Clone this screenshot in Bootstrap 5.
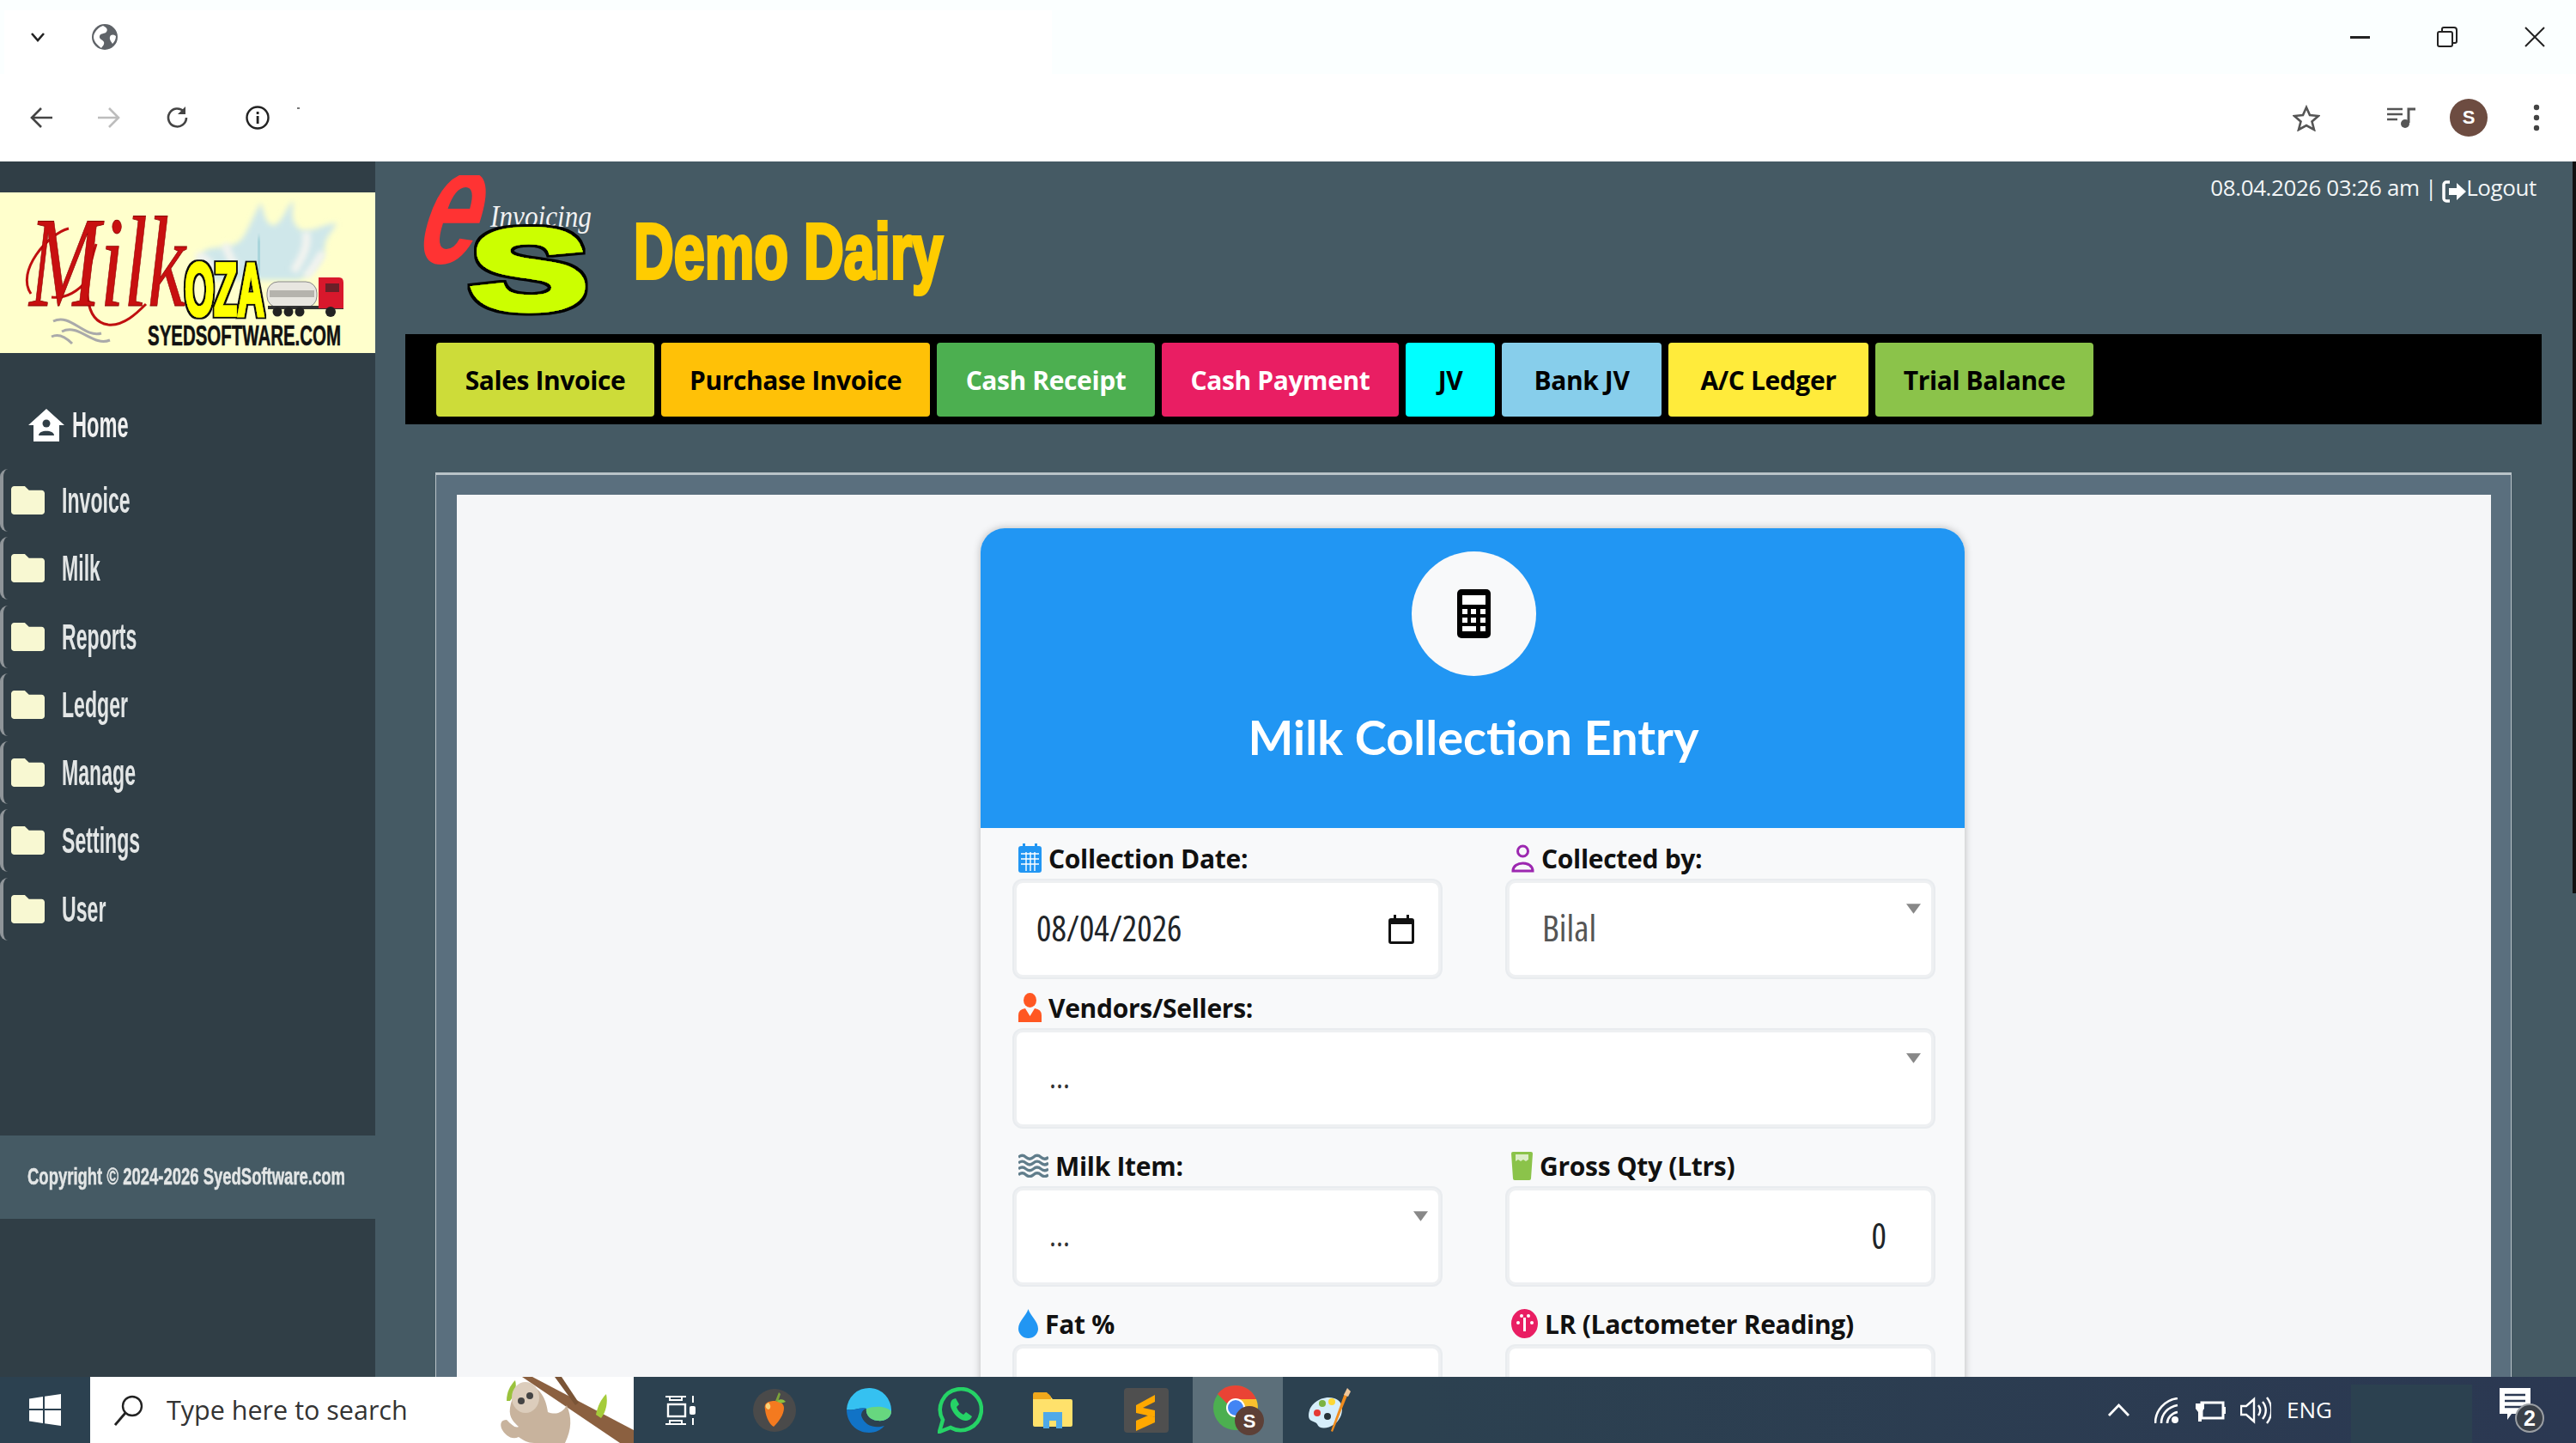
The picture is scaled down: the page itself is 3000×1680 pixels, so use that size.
<!DOCTYPE html>
<html lang="en">
<head>
    <meta charset="UTF-8">
    <title>Milk Collection Entry - Demo Dairy</title>
    <link href="https://cdn.jsdelivr.net/npm/bootstrap@5.3.2/dist/css/bootstrap.min.css" rel="stylesheet">
    <style>
        html, body { width: 3000px; height: 1680px; overflow: hidden; }
        body { font-family: "Open Sans", "Liberation Sans", sans-serif; background: #fff; }

        /* browser chrome */
        .tab-strip { height: 86px; background: #fbffff; padding-left: 5px; }
        .tab-white { width: 1220px; height: 74px; margin-top: 12px; padding-bottom: 12px; background: #fff; }
        .tab-slot { width: 78px; }
        .win-controls { width: 300px; }
        .tool-strip { height: 102px; background: #fff; padding-left: 35px; padding-right: 25px; }
        .tool-btn { width: 79px; }
        .tool-btn-b { width: 85px; }
        .dot-speck { width: 3px; height: 2px; background: #777; margin: -22px 0 0 32px; }
        .avatar-s { width: 44px; height: 44px; border-radius: 50%; background: #6d4c41; color: #fff; font: 700 22px "Liberation Sans", sans-serif; }

        /* app */
        .app-row { height: 1415px; overflow: hidden; }
        .side { width: 437px; background: #303e46; padding-top: 36px; }
        .side-logo { height: 187px; display: block; }
        .home-row { height: 75px; margin-top: 46px; margin-bottom: 14px; padding-left: 33px; color: #f1f1f1; }
        .narrow-text { display: inline-block; transform: scaleX(.55); transform-origin: 0 50%; white-space: nowrap; font-family: "Liberation Sans", sans-serif; font-weight: 700; }
        .home-row .narrow-text { font-size: 43px; margin-left: 9px; }
        .side-menu { list-style: none; margin: 0; padding: 0; }
        .side-menu li { height: 73px; margin-bottom: 6.3px; border-left: 4px solid #8f9599; border-radius: 9px; padding-left: 9px; color: #e3e6e6; }
        .side-menu .narrow-text { font-size: 42px; margin-left: 20px; }
        .copy-band { height: 97px; margin-top: 227px; background: #455a64; padding-left: 32px; color: #e3e6e6; }
        .copy-band .narrow-text { font-size: 28px; transform: scaleX(.66); -webkit-text-stroke: .5px #e3e6e6; }

        .main-pane { width: 2559px; background: #455a64; }
        .head-row { height: 201px; padding-left: 53px; padding-right: 42px; }
        .biz-title { font-family: "Liberation Sans", sans-serif; font-weight: 700; font-size: 90px; color: #fc0; -webkit-text-stroke: 4px #fc0; margin: 60px 0 0 48px; transform: scaleX(.72); transform-origin: 0 50%; white-space: nowrap; line-height: 1; }
        .clock-line { color: #f2f5f6; font-size: 26px; letter-spacing: -.4px; padding-top: 11px; font-stretch: 90%; white-space: nowrap; }
        .quick-bar { height: 105px; margin: 0 36px 0 35px; padding: 10px 36px; background: #000; gap: 8px; }
        .quick-btn { height: 86px; border: 0; border-radius: 4px; font-size: 30px; letter-spacing: -.4px; font-weight: 700; font-stretch: 92%; color: #000; padding: 0; display: flex; align-items: center; justify-content: center; }
        .qb-sales { width: 254px; background: #cddc39; }
        .qb-purchase { width: 313px; background: #ffc107; }
        .qb-receipt { width: 254px; background: #4caf50; color: #fff; }
        .qb-payment { width: 276px; background: #e91e63; color: #fff; }
        .qb-jv { width: 104px; background: #0ff; }
        .qb-bank { width: 186px; background: #87ceeb; }
        .qb-ledger { width: 233px; background: #ffeb3b; }
        .qb-trial { width: 254px; background: #8bc34a; }

        .outer-panel { margin: 56px 71px 0 70px; border: 1px solid #b9c3c8; border-top-width: 3px; background: #5a6f7e; padding: 23px 23px 0 24px; height: 1100px; }
        .inner-panel { background: #f5f6f8; padding-top: 39px; height: 100%; }
        .entry-card { width: 1146px; margin-left: 610px; border-radius: 28px; background: #f8f9fa; box-shadow: 0 0 10px rgba(0,0,0,.25); overflow: hidden; }
        .entry-head { height: 349px; background: #2196f3; padding: 27px 0 0 2px; }
        .calc-circle { width: 145px; height: 145px; border-radius: 50%; background: #f8f9fa; }
        .entry-title { font-family: Lato, sans-serif; font-weight: 700; font-size: 56px; color: #fff; margin: 33px 0 0; line-height: 76px; }
        .entry-body { padding: 15px 36px 0 39px; }
        .gutter-wide { --bs-gutter-x: 77px; }
        .field-label { height: 40px; margin-bottom: 6px; padding-left: 5px; font-size: 30px; letter-spacing: -.3px; font-weight: 700; font-stretch: 92%; color: #111; white-space: nowrap; gap: 8px; }
        .field-input { height: 113px; border: 3px solid #eef0f2; border-radius: 10px; background-color: #fff; font-size: 41px; font-stretch: 82%; color: #212529; padding: 0 38px 4px; box-shadow: 0 0 0 2px #e9ecef; }
        select.field-input { background-image: url("data:image/svg+xml,%3Csvg xmlns='http://www.w3.org/2000/svg' viewBox='0 0 16 11'%3E%3Cpath fill='%23888' d='M0 0h16L8 11z'/%3E%3C/svg%3E"); background-repeat: no-repeat; background-position: right 12px top 24px; background-size: 17px 12px; }
        .date-input { background-image: url("data:image/svg+xml,%3Csvg xmlns='http://www.w3.org/2000/svg' viewBox='0 0 30 34'%3E%3Cpath fill='%23111' d='M6 0h3v4h12V0h3v4h3a3 3 0 0 1 3 3v24a3 3 0 0 1-3 3H3a3 3 0 0 1-3-3V7a3 3 0 0 1 3-3h3zM3 11v20h24V11z'/%3E%3C/svg%3E"); background-repeat: no-repeat; background-position: right 28px center; background-size: 30px 34px; padding-left: 23px; }
        .bilal-select { color: #555; font-size: 42px; }
        .dots-select { color: #333; font-size: 36px; }
        .qty-input { text-align: right; padding-right: 52px; }
        .gap-a { margin-bottom: 15px; }
        .gap-b { margin-bottom: 25px; }

        .scroll-track { width: 4px; background: #455a64; }
        .scroll-thumb { height: 852px; background: #111; }

        /* taskbar */
        .task-bar { height: 77px; background: linear-gradient(90deg, #2c4150 0%, #2c4150 55%, #2b3852 100%); padding-right: 37px; }
        .start-slot { width: 105px; }
        .search-box { width: 633px; height: 77px; background: #fff; padding-left: 28px; overflow: hidden; font-size: 30.5px; color: #333; font-stretch: 92%; }
        .search-text { margin-left: 27px; white-space: nowrap; }
        .task-apps { display: grid; grid-template-columns: 107px 113px 107px 107px 108px 109px 105px 108px; height: 77px; }
        .app-active { background: #5c6f7a; }
        .tray-group { margin-left: auto; }
        .tray-eng { color: #fff; font-size: 26px; font-stretch: 90%; margin: 0 22px 0 18px; }
        .clock-block { width: 141px; height: 68px; background: #2c4150; margin: 9px 32px 0 0; }
    </style>
</head>
<body class="d-flex flex-column">
    <!-- tab strip -->
    <div class="tab-strip d-flex">
        <div class="tab-white d-flex align-items-center">
            <div class="tab-slot d-flex justify-content-center">
                <svg width="18" height="12" viewBox="0 0 18 12"><path d="M2 2l7 8 7-8" fill="none" stroke="#222" stroke-width="2.6"/></svg>
            </div>
            <svg width="30" height="30" viewBox="0 0 30 30" class="ms-4"><circle cx="15" cy="15" r="15" fill="#5f6368"/><path d="M13 2c4 2 6 4 4 7s-7 1-8 5 4 4 5 7-2 5-3 7C6 24 2 20 2 15S8 3 13 2zM28 14c-3-2-6-2-7 1s2 6 3 8c2-2 4-5 4-9z" fill="#fff"/></svg>
        </div>
        <div class="win-controls ms-auto d-flex align-items-center">
            <svg width="23" height="3" viewBox="0 0 23 3" style="margin-left:37px"><rect width="23" height="3" fill="#222"/></svg>
            <svg width="24" height="24" viewBox="0 0 24 24" style="margin-left:78px"><path d="M6 6V3a2 2 0 0 1 2-2h12a3 3 0 0 1 3 3v13a2 2 0 0 1-2 2h-3" fill="none" stroke="#222" stroke-width="2"/><rect x="1" y="6" width="17" height="17" rx="2" fill="none" stroke="#222" stroke-width="2"/></svg>
            <svg width="24" height="24" viewBox="0 0 24 24" style="margin-left:78px"><path d="M1 1l22 22M23 1L1 23" stroke="#222" stroke-width="2"/></svg>
        </div>
    </div>
    <!-- address toolbar -->
    <div class="tool-strip d-flex align-items-center">
        <div class="tool-btn d-flex">
            <svg width="26" height="26" viewBox="0 0 26 26"><path d="M13 2L2 13l11 11M2 13h24" fill="none" stroke="#444" stroke-width="2.6"/></svg>
        </div>
        <div class="tool-btn d-flex">
            <svg width="26" height="26" viewBox="0 0 26 26"><path d="M13 2l11 11-11 11M24 13H0" fill="none" stroke="#bdbdbd" stroke-width="2.6"/></svg>
        </div>
        <div class="tool-btn-b d-flex">
            <svg width="28" height="28" viewBox="0 0 28 28"><path d="M24 14a10.500 10.500 0 1 1-3-7.400" fill="none" stroke="#444" stroke-width="2.600"/><path d="M23 1v9h-9z" fill="#444"/></svg>
        </div>
        <svg width="28" height="28" viewBox="0 0 28 28" class="ms-2"><circle cx="14" cy="14" r="12.500" fill="none" stroke="#222" stroke-width="2.400"/><rect x="12.700" y="12" width="2.800" height="9" fill="#222"/><rect x="12.700" y="7" width="2.800" height="3" fill="#222"/></svg>
        <span class="dot-speck"></span>
        <div class="ms-auto d-flex align-items-center">
            <svg width="32" height="31" viewBox="0 0 32 31"><path d="M16 3l4 9 10 1-7.500 6.500L25 29l-9-5-9 5 2.500-9.500L2 13l10-1z" fill="none" stroke="#555" stroke-width="2.600"/></svg>
            <svg width="33" height="25" viewBox="0 0 33 25" style="margin-left:78px"><path d="M0 2h18M0 8h18M0 14h12" stroke="#555" stroke-width="2.600"/><path d="M25 18V2h8" fill="none" stroke="#555" stroke-width="3"/><circle cx="21" cy="19" r="5" fill="#555"/></svg>
            <div class="avatar-s d-flex align-items-center justify-content-center" style="margin-left:40px">S</div>
            <svg width="8" height="32" viewBox="0 0 8 32" style="margin-left:53px;margin-right:17px"><circle cx="4" cy="4" r="3.200" fill="#444"/><circle cx="4" cy="16" r="3.200" fill="#444"/><circle cx="4" cy="28" r="3.200" fill="#444"/></svg>
        </div>
    </div>

    <div class="app-row d-flex">
        <aside class="side flex-shrink-0">
            <!-- logo: artwork in shapes, wording as svg text -->
            <svg class="side-logo" width="437" height="187" viewBox="0 0 437 187">
                <defs>
                    <filter id="soft"><feGaussianBlur stdDeviation="3"/></filter>
                    <filter id="thin-edge" x="-10%" y="-10%" width="120%" height="120%">
                        <feMorphology in="SourceAlpha" operator="dilate" radius="1.600" result="fat"/>
                        <feFlood flood-color="#111"/><feComposite in2="fat" operator="in"/>
                        <feMerge><feMergeNode/><feMergeNode in="SourceGraphic"/></feMerge>
                    </filter>
                </defs>
                <rect width="437" height="187" fill="#ffc"/>
                <path d="M232 76c10-20 30-5 48-20 8-8 18-36 24-44 4 14 6 28 16 26 10-4 14-24 22-28-2 14-4 28 10 34 14 2 26-8 40-8-6 12-14 16-14 30-2 14-14 30-30 36H240c-8-10-14-18-8-26z" fill="#cfe7ea" filter="url(#soft)"/>
                <path d="M302 52c-2 20-2 30 0 44" stroke="#a9d5dc" stroke-width="30" fill="none" filter="url(#soft)"/>
                <path d="M228 74c10 0 16 8 22 18M356 46c4 16-4 30-14 46M376 70c-6 8-10 18-20 28M262 60c4 10 6 20 14 26" stroke="#f4f4f0" stroke-width="9" fill="none" filter="url(#soft)"/>
                <path d="M62 150c20-10 36 20 56 14M72 162c20-10 36 18 56 10M60 168c8-4 16 0 24 8" fill="none" stroke="#aaa" stroke-width="3"/>
                <path d="M36 118C18 92 56 48 80 42M60 122c16 2 30-6 42-20M112 60c-16 50-14 90 14 94 18 2 34-14 44-24" fill="none" stroke="#c01010" stroke-width="3"/>
                <text x="34" y="132" font-family="Liberation Serif" font-style="italic" font-size="150" fill="#c81010" stroke="#8a0000" stroke-width=".8" textLength="182" lengthAdjust="spacingAndGlyphs">Milk</text>
                <text x="215" y="143" font-family="Liberation Sans" font-weight="700" font-size="88" fill="#ff0" stroke="#ff0" stroke-width="3.500" filter="url(#thin-edge)" textLength="93" lengthAdjust="spacingAndGlyphs">OZA</text>
                <rect x="311" y="104" width="58" height="30" rx="13" fill="#e8e6e0" stroke="#888"/>
                <path d="M314 118h52" stroke="#b5b3ad" stroke-width="8"/>
                <rect x="312" y="132" width="88" height="4" fill="#333"/>
                <path d="M371 99h24q5 0 5 6v30h-29z" fill="#d8182c"/>
                <rect x="379" y="106" width="16" height="10" fill="#6a2028"/>
                <g fill="#222"><circle cx="323" cy="139" r="5.500"/><circle cx="336" cy="139" r="5.500"/><circle cx="349" cy="139" r="5.500"/><circle cx="385" cy="139" r="6"/></g>
                <text x="172" y="178" font-family="Liberation Sans" font-weight="700" font-size="34" fill="#111" stroke="#111" stroke-width=".6" textLength="225" lengthAdjust="spacingAndGlyphs">SYEDSOFTWARE.COM</text>
            </svg>
            <div class="home-row d-flex align-items-center">
                <svg width="42" height="38" viewBox="0 0 42 38"><path d="M21 0L0 19h6v19h30V19h6z" fill="#fff"/><circle cx="21" cy="17" r="4.500" fill="#303e46"/><path d="M12 31c0-7 18-7 18 0z" fill="#303e46"/></svg>
                <span class="narrow-text">Home</span>
            </div>
            <ul class="side-menu">
                <li class="d-flex align-items-center"><svg width="39" height="33" viewBox="0 0 512 448" preserveAspectRatio="none"><use href="#folder-ic"/></svg><span class="narrow-text">Invoice</span></li>
                <li class="d-flex align-items-center"><svg width="39" height="33" viewBox="0 0 512 448" preserveAspectRatio="none"><use href="#folder-ic"/></svg><span class="narrow-text">Milk</span></li>
                <li class="d-flex align-items-center"><svg width="39" height="33" viewBox="0 0 512 448" preserveAspectRatio="none"><use href="#folder-ic"/></svg><span class="narrow-text">Reports</span></li>
                <li class="d-flex align-items-center"><svg width="39" height="33" viewBox="0 0 512 448" preserveAspectRatio="none"><use href="#folder-ic"/></svg><span class="narrow-text">Ledger</span></li>
                <li class="d-flex align-items-center"><svg width="39" height="33" viewBox="0 0 512 448" preserveAspectRatio="none"><use href="#folder-ic"/></svg><span class="narrow-text">Manage</span></li>
                <li class="d-flex align-items-center"><svg width="39" height="33" viewBox="0 0 512 448" preserveAspectRatio="none"><use href="#folder-ic"/></svg><span class="narrow-text">Settings</span></li>
                <li class="d-flex align-items-center"><svg width="39" height="33" viewBox="0 0 512 448" preserveAspectRatio="none"><use href="#folder-ic"/></svg><span class="narrow-text">User</span></li>
            </ul>
            <div class="copy-band d-flex align-items-center"><span class="narrow-text">Copyright © 2024-2026 SyedSoftware.com</span></div>
        </aside>

        <main class="main-pane flex-shrink-0">
            <div class="head-row d-flex">
                <svg width="200" height="165" viewBox="0 0 200 165" class="mt-3 flex-shrink-0">
                    <defs>
                        <filter id="black-edge" x="-10%" y="-10%" width="120%" height="120%">
                            <feMorphology in="SourceAlpha" operator="dilate" radius="3" result="fat"/>
                            <feFlood flood-color="#000"/><feComposite in2="fat" operator="in"/>
                            <feMerge><feMergeNode/><feMergeNode in="SourceGraphic"/></feMerge>
                        </filter>
                    </defs>
                    <text transform="translate(-12 102) skewX(-18) scale(1.25 1.95)" font-family="Liberation Sans" font-weight="700" font-size="100" fill="#f33">e</text>
                    <text x="81" y="60" font-family="Liberation Serif" font-style="italic" font-size="36" fill="#f1f1f1" textLength="118" lengthAdjust="spacingAndGlyphs">Invoicing</text>
                    <text x="58" y="156" font-family="Liberation Sans" font-weight="700" font-size="132" fill="#cf0" stroke="#cf0" stroke-width="7" filter="url(#black-edge)" textLength="136" lengthAdjust="spacingAndGlyphs">S</text>
                </svg>
                <div class="biz-title">Demo Dairy</div>
                <div class="clock-line ms-auto">08.04.2026 03:26 am | <svg width="28" height="26" viewBox="0 0 28 26" class="align-text-bottom"><path d="M9 2H5a3 3 0 0 0-3 3v16a3 3 0 0 0 3 3h4" fill="none" stroke="#fff" stroke-width="3.500"/><path d="M8 9h9V3l11 10-11 10v-6H8z" fill="#fff"/></svg>Logout</div>
            </div>
            <nav class="quick-bar d-flex">
                <a class="btn quick-btn qb-sales">Sales Invoice</a>
                <a class="btn quick-btn qb-purchase">Purchase Invoice</a>
                <a class="btn quick-btn qb-receipt">Cash Receipt</a>
                <a class="btn quick-btn qb-payment">Cash Payment</a>
                <a class="btn quick-btn qb-jv">JV</a>
                <a class="btn quick-btn qb-bank">Bank JV</a>
                <a class="btn quick-btn qb-ledger">A/C Ledger</a>
                <a class="btn quick-btn qb-trial">Trial Balance</a>
            </nav>
            <div class="outer-panel">
                <div class="inner-panel">
                    <div class="entry-card">
                        <div class="entry-head text-center">
                            <div class="calc-circle mx-auto d-flex align-items-center justify-content-center">
                                <svg width="39" height="57" viewBox="0 0 39 57">
                                    <rect width="39" height="57" rx="5" fill="#000"/>
                                    <rect x="6" y="7" width="27" height="11" fill="#fff"/>
                                    <g fill="#fff">
                                        <rect x="6" y="23" width="6" height="6"/><rect x="16" y="23" width="6" height="6"/><rect x="27" y="23" width="6" height="6"/>
                                        <rect x="6" y="33" width="6" height="6"/><rect x="16" y="33" width="6" height="6"/><rect x="27" y="33" width="6" height="6"/>
                                        <rect x="6" y="43" width="16" height="6"/><rect x="27" y="43" width="6" height="6"/>
                                    </g>
                                </svg>
                            </div>
                            <h1 class="entry-title">Milk Collection Entry</h1>
                        </div>
                        <form class="entry-body">
                            <div class="row gutter-wide gap-a">
                                <div class="col-6">
                                    <label class="field-label d-flex align-items-center">
                                        <svg width="27" height="34" viewBox="0 0 27 34"><rect y="3" width="27" height="31" rx="3" fill="#2196f3"/><rect x="5" width="3" height="6" fill="#2196f3"/><rect x="19" width="3" height="6" fill="#2196f3"/><path d="M3 12h21M3 18h21M3 24h21M9 10v22M14 10v22M19 10v22" stroke="#fff" stroke-width="1.400"/></svg>
                                        Collection Date:
                                    </label>
                                    <input type="text" class="form-control field-input date-input" value="08/04/2026">
                                </div>
                                <div class="col-6">
                                    <label class="field-label d-flex align-items-center">
                                        <svg width="27" height="33" viewBox="0 0 27 33"><circle cx="13.500" cy="8" r="6" fill="none" stroke="#9c27b0" stroke-width="3"/><path d="M2 31c0-12 23-12 23 0z" fill="none" stroke="#9c27b0" stroke-width="3"/></svg>
                                        Collected by:
                                    </label>
                                    <select class="form-select field-input bilal-select"><option>Bilal</option></select>
                                </div>
                            </div>
                            <div class="gap-b">
                                <label class="field-label d-flex align-items-center">
                                    <svg width="27" height="34" viewBox="0 0 27 34"><ellipse cx="13.500" cy="8.500" rx="7.500" ry="8.500" fill="#ff5722"/><path d="M0 34V26q0-7 8-8l5.500 9 5.500-9q8 1 8 8v8z" fill="#ff5722"/></svg>
                                    Vendors/Sellers:
                                </label>
                                <select class="form-select field-input dots-select"><option>...</option></select>
                            </div>
                            <div class="row gutter-wide gap-b">
                                <div class="col-6">
                                    <label class="field-label d-flex align-items-center">
                                        <svg width="35" height="28" viewBox="0 0 36 28"><path d="M0 4q4.500-4 9 0t9 0 9 0 9 0M0 11q4.500-4 9 0t9 0 9 0 9 0M0 18q4.500-4 9 0t9 0 9 0 9 0M0 25q4.500-4 9 0t9 0 9 0 9 0" fill="none" stroke="#607d8b" stroke-width="3.400"/></svg>
                                        Milk Item:
                                    </label>
                                    <select class="form-select field-input dots-select"><option>...</option></select>
                                </div>
                                <div class="col-6">
                                    <label class="field-label d-flex align-items-center">
                                        <svg width="25" height="33" viewBox="0 0 25 33"><path d="M0 2q0-2 2-2h21q2 0 2 2l-2 29q0 2-2 2H4q-2 0-2-2z" fill="#8bc34a"/><path d="M5 3h15v6l-3 2-3-2-3 2-3-2-3 2z" fill="#dcedc8"/></svg>
                                        Gross Qty (Ltrs)
                                    </label>
                                    <input type="text" class="form-control field-input qty-input" value="0">
                                </div>
                            </div>
                            <div class="row gutter-wide">
                                <div class="col-6">
                                    <label class="field-label d-flex align-items-center">
                                        <svg width="23" height="34" viewBox="0 0 23 34"><path d="M11.500 0C14 8 23 14 23 23a11.500 11 0 0 1-23 0C0 14 9 8 11.500 0z" fill="#2196f3"/></svg>
                                        Fat %
                                    </label>
                                    <input type="text" class="form-control field-input">
                                </div>
                                <div class="col-6">
                                    <label class="field-label d-flex align-items-center">
                                        <svg width="31" height="34" viewBox="0 0 31 34"><ellipse cx="15.500" cy="17" rx="15.500" ry="17" fill="#e91e63"/><g fill="#fff"><circle cx="8" cy="16" r="2"/><circle cx="12" cy="8" r="2"/><circle cx="20" cy="8" r="2"/><circle cx="24" cy="16" r="2"/><rect x="14" y="10" width="3" height="16"/></g></svg>
                                        LR (Lactometer Reading)
                                    </label>
                                    <input type="text" class="form-control field-input">
                                </div>
                            </div>
                        </form>
                    </div>
                </div>
            </div>
        </main>
        <div class="scroll-track"><div class="scroll-thumb"></div></div>
    </div>

    <!-- windows taskbar -->
    <footer class="task-bar d-flex align-items-stretch">
        <div class="start-slot d-flex align-items-center justify-content-center">
            <svg width="37" height="37" viewBox="0 0 37 37"><path d="M0 5.500L16 3v14H0zM18 2.700L37 0v17H18zM0 19h16v15L0 31.500zM18 19h19v18l-19-2.700z" fill="#fff"/></svg>
        </div>
        <div class="search-box d-flex align-items-center">
            <svg width="34" height="36" viewBox="0 0 34 36"><circle cx="21" cy="13" r="11" fill="none" stroke="#222" stroke-width="2.400"/><path d="M13 21L1 35" stroke="#222" stroke-width="2.800"/></svg>
            <span class="search-text">Type here to search</span>
            <svg width="158" height="77" viewBox="0 0 158 77" class="ms-auto flex-shrink-0">
                <path d="M40 0l118 62v15h-16L28 0z" fill="#8b6040"/>
                <path d="M74 0l20 30-4 3L66 0z" fill="#7a5436"/>
                <path d="M10 28c0-10 4-18 10-24 2 8 0 16-6 24z" fill="#9ac23c"/>
                <path d="M114 44c2-10 6-18 12-24 2 10 0 20-6 28z" fill="#a5cc3a"/>
                <path d="M14 36c-2 12 6 18 10 22-4 2-8-2-14-8-6 0-8 4-6 10 4 8 12 14 20 10 6 4 10 7 18 7h36c8-16 8-30 2-44-4 8-12 12-22 8-2-16-10-32-26-30-10 2-16 12-18 25z" fill="#c8b39d"/>
                <ellipse cx="32" cy="24" rx="16" ry="18" fill="#dccdbc"/>
                <circle cx="27" cy="28" r="4" fill="#444"/><circle cx="37" cy="22" r="4" fill="#444"/>
            </svg>
        </div>
        <div class="task-apps">
            <div class="d-flex align-items-center justify-content-center"><svg width="36" height="36" viewBox="0 0 36 36"><path d="M1 2h24M1 34h24M6 2v4h14V2M6 34v-4h14v4" fill="none" stroke="#fff" stroke-width="2"/><rect x="4" y="11" width="20" height="14" fill="none" stroke="#fff" stroke-width="2.400"/><path d="M33 1v8M33 27v8" stroke="#fff" stroke-width="2"/><rect x="29" y="13" width="7" height="10" rx="2" fill="#fff"/></svg></div>
            <div class="d-flex align-items-center justify-content-center"><svg width="50" height="50" viewBox="0 0 50 50"><ellipse cx="25" cy="25" rx="25" ry="25" fill="#4a4a4a"/><path d="M26 14c-8 0-14 2-12 10 1 10 6 18 10 20 6-6 12-14 12-22 0-5-5-8-10-8z" fill="#f47a1f"/><path d="M18 16c3 3 3 7 0 8-4-1-5-6 0-8z" fill="#f9d27a"/><path d="M26 14l4-10 2 2-3 9z" fill="#7ca33a"/><path d="M28 14c4-3 8-2 10 1-4 2-8 2-10-1z" fill="#8cbf3f"/></svg></div>
            <div class="d-flex align-items-center justify-content-center"><svg width="52" height="53" viewBox="0 0 52 53"><path d="M0 26a26 26 0 0 1 52 2c0 8-8 12-16 11-10-1-14-8-13-14C15 23 8 28 0 26z" fill="#35c1f1"/><path d="M52 28c0 8-8 12-16 11-10-1-14-8-13-14 8-3 22-4 29 3z" fill="#67d77f"/><path d="M0 26c0 16 12 27 26 27 8 0 14-3 18-8-14 4-24-2-27-12 0-4 2-7 6-8C15 23 8 28 0 26z" fill="#1173c6"/></svg></div>
            <div class="d-flex align-items-center justify-content-center"><svg width="53" height="54" viewBox="0 0 53 54"><path d="M2 52l4-14a24 24 0 1 1 9 9z" fill="none" stroke="#25d366" stroke-width="4.500"/><path d="M18 14c-3 2-4 6-2 11 3 7 9 13 16 14 4 0 7-2 8-5l-7-5-3 3c-4-2-7-5-8-9l3-3-4-7z" fill="#25d366"/></svg></div>
            <div class="d-flex align-items-center justify-content-center"><svg width="46" height="42" viewBox="0 0 46 42"><path d="M0 4q0-2 2-2h16l5 6h21q2 0 2 2v28q0 2-2 2H2q-2 0-2-2z" fill="#ffe16b"/><path d="M0 3q0-3 2-3h14l5 5v3H0z" fill="#f0a81c"/><path d="M12 42V23h22v19h-7v-9h-8v9z" fill="#4fa9e8"/></svg></div>
            <div class="d-flex align-items-center justify-content-center"><svg width="52" height="52" viewBox="0 0 52 52"><rect width="52" height="52" rx="4" fill="#4f4f4f"/><path d="M36 8L14 20v8l22 6V26l-14-3 14-7z" fill="#ffa800"/><path d="M14 26l22 8v6L14 50V38l14-6-14-3z" fill="#ffa800"/></svg></div>
            <div class="app-active d-flex align-items-center justify-content-center">
                <svg width="60" height="58" viewBox="0 0 60 58">
                    <circle cx="27" cy="26" r="26" fill="#4caf50"/>
                    <path d="M27 0a26 26 0 0 1 24 16H27a10 10 0 0 0-9 6L6 10A26 26 0 0 1 27 0z" fill="#ea4335"/>
                    <path d="M27 16h24a26 26 0 0 1-8 30z" fill="#fbc02d"/>
                    <circle cx="27" cy="26" r="11" fill="#fff"/><circle cx="27" cy="26" r="9" fill="#4285f4"/>
                    <circle cx="43" cy="41" r="17" fill="#5d4037"/>
                    <text x="43" y="49" text-anchor="middle" font-family="Liberation Sans" font-weight="700" font-size="22" fill="#fff">S</text>
                </svg>
            </div>
            <div class="d-flex align-items-center justify-content-center"><svg width="52" height="52" viewBox="0 0 52 52"><path d="M32 12C18 8 2 18 2 32c0 8 8 6 10 10 2 6 12 6 20 0 10-6 14-26 0-30z" fill="#d6eefb"/><circle cx="12" cy="29" r="4" fill="#e53935"/><circle cx="18" cy="18" r="4" fill="#7cb342"/><circle cx="29" cy="16" r="4" fill="#fdd835"/><circle cx="24" cy="33" r="4" fill="#263238"/><path d="M44 6L28 50l2 1L47 9z" fill="#f08c1e"/><path d="M43 8l4-8 4 4-3 6z" fill="#f1c79a"/></svg></div>
        </div>
        <div class="tray-group d-flex align-items-center">
            <svg width="27" height="17" viewBox="0 0 27 17"><path d="M2 15L13.500 3 25 15" fill="none" stroke="#fff" stroke-width="2.800"/></svg>
            <svg width="28" height="30" viewBox="0 0 28 30" style="margin-left:28px"><path d="M1 30C1 15 12 3 27 1M8 30C8 19 16 11 27 9M15 30c0-6 5-12 12-13" fill="none" stroke="#fff" stroke-width="2.600"/><circle cx="24" cy="26" r="4" fill="#fff"/></svg>
            <svg width="36" height="27" viewBox="0 0 36 27" style="margin-left:19px"><path d="M3 0v6M9 0v6M1 6h10v6l-3 4v11H4V16l-3-4z" fill="#fff"/><rect x="8" y="5" width="25" height="18" fill="none" stroke="#fff" stroke-width="3"/><rect x="33" y="10" width="3" height="8" fill="#fff"/></svg>
            <svg width="36" height="32" viewBox="0 0 36 32" style="margin-left:17px"><path d="M1 11h6l9-8v26l-9-8H1z" fill="none" stroke="#fff" stroke-width="2.400"/><path d="M21 10c3 4 3 8 0 12M26 6c5 6 5 14 0 20M31 1c7 9 7 21 0 30" fill="none" stroke="#fff" stroke-width="2.400"/></svg>
            <span class="tray-eng">ENG</span>
            <div class="clock-block align-self-start"></div>
            <svg width="52" height="52" viewBox="0 0 52 52"><path d="M0 0h36v30H14l-5 7v-7H0z" fill="#fff"/><path d="M6 8h24M6 15h24M6 22h20" stroke="#2b3852" stroke-width="2.400"/><circle cx="35" cy="35" r="16" fill="#3a4048" stroke="#9a9ea3" stroke-width="2"/><text x="35" y="44" text-anchor="middle" font-family="Liberation Sans" font-weight="700" font-size="25" fill="#fff">2</text></svg>
        </div>
    </footer>

    <svg width="0" height="0" class="d-none">
        <defs><path id="folder-ic" d="M464 64H272l-64-64H48C21.490 0 0 21.490 0 48v352c0 26.510 21.490 48 48 48h416c26.510 0 48-21.490 48-48V112c0-26.510-21.490-48-48-48z" fill="#f8f8d2"/></defs>
    </svg>
    <script src="https://cdn.jsdelivr.net/npm/bootstrap@5.3.2/dist/js/bootstrap.bundle.min.js"></script>
</body>
</html>
